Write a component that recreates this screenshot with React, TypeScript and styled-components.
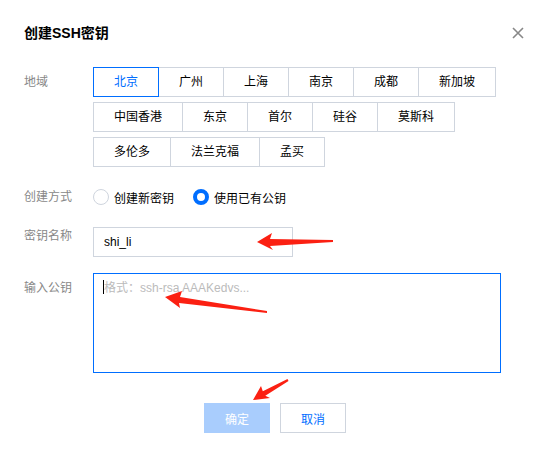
import styled, { createGlobalStyle } from "styled-components";

const GlobalStyle = createGlobalStyle`
  body {
    margin: 0;
    background: #fff;
    font-family: "Liberation Sans", "Noto Sans CJK SC", sans-serif;
  }
`;

const regions = [
  "北京", "广州", "上海", "南京", "成都", "新加坡",
  "中国香港", "东京", "首尔", "硅谷", "莫斯科",
  "多伦多", "法兰克福", "孟买",
];

const Dialog = styled.div`
  position: relative;
  width: 543px;
  height: 451px;
  background: #fff;
  box-sizing: border-box;
  overflow: hidden;
`;

const Header = styled.div`
  display: flex;
  justify-content: space-between;
  align-items: center;
  padding: 23px 19px 0 24px;
  height: 20px;
`;

const Title = styled.h3`
  margin: 0;
  font-size: 14px;
  line-height: 20px;
  font-weight: bold;
  color: #000;
`;

const Close = styled.button`
  border: none;
  background: none;
  padding: 0;
  width: 12px;
  height: 12px;
  display: flex;
  cursor: pointer;
  svg {
    stroke: #888;
    stroke-width: 1.6;
  }
`;

const Row = styled.div<{ $mt: number }>`
  display: flex;
  margin-top: ${(p) => p.$mt}px;
`;

const Label = styled.div<{ $pt: number }>`
  width: 69px;
  flex-shrink: 0;
  padding-left: 24px;
  padding-top: ${(p) => p.$pt}px;
  font-size: 12px;
  line-height: 18px;
  color: #888;
`;

const RegionList = styled.div`
  display: flex;
  flex-wrap: wrap;
  row-gap: 5px;
  width: 410px;
`;

const RegionButton = styled.button<{ $active?: boolean }>`
  position: relative;
  height: 30px;
  padding: 0 20px;
  margin-right: -1px;
  border: 1px solid ${(p) => (p.$active ? "#006eff" : "#cfd5de")};
  z-index: ${(p) => (p.$active ? 1 : 0)};
  background: #fff;
  color: ${(p) => (p.$active ? "#006eff" : "#000")};
  font-family: inherit;
  font-size: 12px;
  line-height: 28px;
  white-space: nowrap;
  cursor: pointer;
`;

const RadioGroup = styled.div`
  display: flex;
  align-items: center;
  height: 18px;
  gap: 19px;
`;

const RadioOption = styled.label`
  display: flex;
  align-items: center;
  gap: 5px;
  font-size: 12px;
  color: #000;
  cursor: pointer;
`;

const RadioDot = styled.span<{ $checked?: boolean }>`
  display: inline-block;
  box-sizing: border-box;
  width: 16px;
  height: 16px;
  border-radius: 50%;
  border: ${(p) => (p.$checked ? "4px solid #006eff" : "1px solid #cfd5de")};
  background: #fff;
`;

const TextInput = styled.input`
  box-sizing: border-box;
  width: 200px;
  height: 30px;
  border: 1px solid #cfd5de;
  padding: 0 10px;
  font-family: inherit;
  font-size: 12px;
  color: #000;
  outline: none;
`;

const AreaWrap = styled.div`
  position: relative;
`;

const TextArea = styled.textarea`
  display: block;
  box-sizing: border-box;
  width: 408px;
  height: 100px;
  border: 1px solid #006eff;
  padding: 5px 10px;
  font-family: inherit;
  font-size: 12px;
  line-height: 18px;
  resize: none;
  outline: none;
  &::placeholder {
    color: #bbb;
  }
`;

const Caret = styled.span`
  position: absolute;
  left: 10px;
  top: 7px;
  width: 1px;
  height: 14px;
  background: #000;
`;

const Footer = styled.div`
  display: flex;
  justify-content: center;
  gap: 10px;
  margin-top: 30px;
  padding-left: 7px;
`;

const Button = styled.button<{ $primary?: boolean }>`
  width: 66px;
  height: 30px;
  font-family: inherit;
  font-size: 12px;
  border: 1px solid ${(p) => (p.$primary ? "#a9cdfd" : "#cfd5de")};
  background: ${(p) => (p.$primary ? "#a9cdfd" : "#fff")};
  color: ${(p) => (p.$primary ? "#fff" : "#006eff")};
  cursor: pointer;
`;

const Annotations = styled.svg`
  position: absolute;
  left: 0;
  top: 0;
  pointer-events: none;
  polygon {
    fill: #fb2012;
  }
`;

export default function App() {
  return (
    <>
      <GlobalStyle />
      <Dialog>
        <Header>
          <Title>创建SSH密钥</Title>
          <Close aria-label="close">
            <svg width="12" height="12" viewBox="0 0 12 12">
              <path d="M1 1L11 11M11 1L1 11" />
            </svg>
          </Close>
        </Header>

        <Row $mt={24}>
          <Label $pt={6}>地域</Label>
          <RegionList>
            {regions.map((r, i) => (
              <RegionButton key={r} $active={i === 0}>
                {r}
              </RegionButton>
            ))}
          </RegionList>
        </Row>

        <Row $mt={21}>
          <Label $pt={0}>创建方式</Label>
          <RadioGroup>
            <RadioOption>
              <RadioDot />
              创建新密钥
            </RadioOption>
            <RadioOption>
              <RadioDot $checked />
              使用已有公钥
            </RadioOption>
          </RadioGroup>
        </Row>

        <Row $mt={21}>
          <Label $pt={0}>密钥名称</Label>
          <TextInput defaultValue="shi_li" />
        </Row>

        <Row $mt={16}>
          <Label $pt={6}>输入公钥</Label>
          <AreaWrap>
            <TextArea placeholder="格式：ssh-rsa AAAKedvs..." />
            <Caret />
          </AreaWrap>
        </Row>

        <Footer>
          <Button $primary>确定</Button>
          <Button>取消</Button>
        </Footer>

        <Annotations width="543" height="451" viewBox="0 0 543 451">
          <polygon points="257,242 272,233 270,239 333,240 333,242 270,246 273,250" />
          <polygon points="165,297 182,291 180,297 267,311 267,313 179,303 180,308" />
          <polygon points="253,400 261,386 262.8,391.3 287.5,379 288.5,381 265.3,395.7 270,398" />
        </Annotations>
      </Dialog>
    </>
  );
}
